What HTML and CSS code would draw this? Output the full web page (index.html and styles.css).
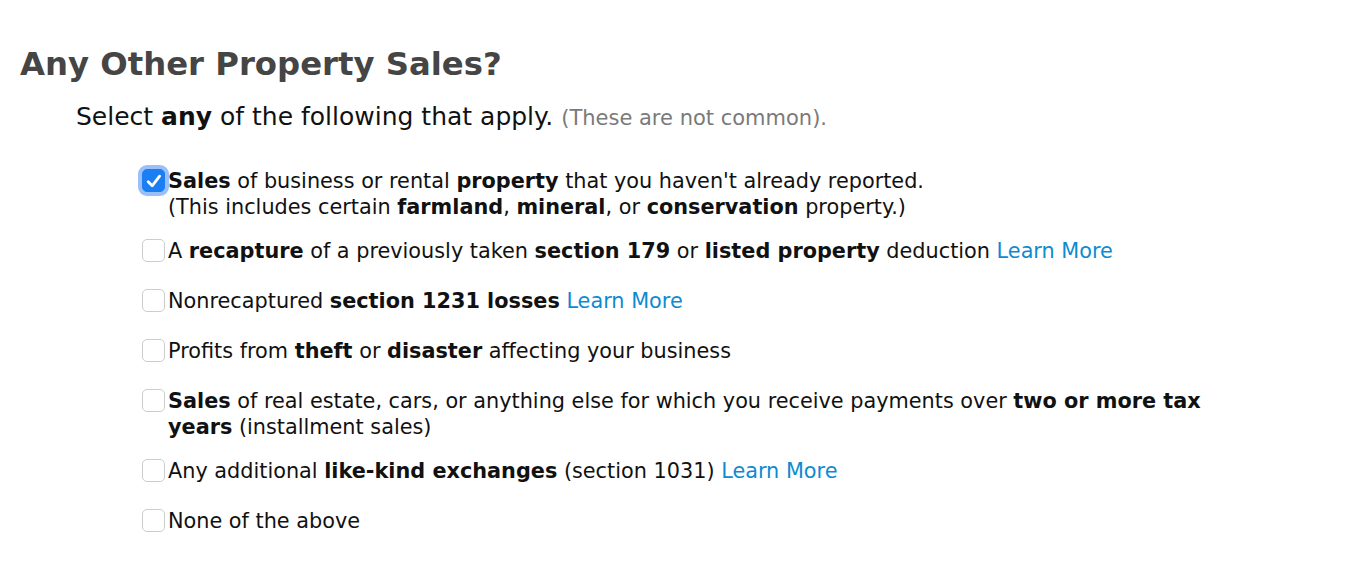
FILE: index.html
```html
<!DOCTYPE html>
<html>
<head>
<meta charset="utf-8">
<link rel="stylesheet" href="styles.css">
</head>
<body>
<main class="page">
  <h1 class="title">Any Other Property Sales?</h1>
  <p class="lead">Select <b>any</b> of the following that apply. <span class="note">(These are not common).</span></p>
  <ul class="options">
    <li class="option">
      <span class="box checked"><svg viewBox="0 0 20 20" width="20" height="20"><path d="M4.2 10.8 L8.2 14.8 L15.6 5.2" fill="none" stroke="#fff" stroke-width="2.8" stroke-linecap="round" stroke-linejoin="round"/></svg></span>
      <span class="label"><b>Sales</b> of business or rental <b>property</b> that you haven't already reported.<br>(This includes certain <b>farmland</b>, <b>mineral</b>, or <b>conservation</b> property.)</span>
    </li>
    <li class="option">
      <span class="box"></span>
      <span class="label">A <b>recapture</b> of a previously taken <b>section 179</b> or <b>listed property</b> deduction <a class="link" href="#">Learn More</a></span>
    </li>
    <li class="option">
      <span class="box"></span>
      <span class="label">Nonrecaptured <b>section 1231 losses</b> <a class="link" href="#">Learn More</a></span>
    </li>
    <li class="option">
      <span class="box"></span>
      <span class="label">Profits from <b>theft</b> or <b>disaster</b> affecting your business</span>
    </li>
    <li class="option">
      <span class="box"></span>
      <span class="label"><b>Sales</b> of real estate, cars, or anything else for which you receive payments over <b>two or more tax years</b> (installment sales)</span>
    </li>
    <li class="option">
      <span class="box"></span>
      <span class="label">Any additional <b>like-kind exchanges</b> (section 1031) <a class="link" href="#">Learn More</a></span>
    </li>
    <li class="option">
      <span class="box"></span>
      <span class="label">None of the above</span>
    </li>
  </ul>
</main>
</body>
</html>
```
FILE: styles.css
```css
html, body { margin: 0; padding: 0; background: #fff; }
body { font-family: "DejaVu Sans", "Liberation Sans", sans-serif; color: #111; }
.page { padding: 40px 0 0 20px; }
.title {
  margin: 0;
  font-size: 32.3px;
  line-height: 48px;
  font-weight: bold;
  color: #454545;
}
.lead {
  margin: 12px 0 0 56px;
  font-size: 25px;
  line-height: 34px;
  color: #111;
}
.lead b { font-weight: bold; }
.note { font-size: 21px; color: #7a7a7a; }
.options {
  list-style: none;
  margin: 33px 0 0 122px;
  padding: 0;
  width: 1070px;
}
.option {
  display: flex;
  align-items: flex-start;
  min-height: 32px;
  margin-bottom: 18px;
}
.box {
  flex: none;
  width: 23px;
  height: 23px;
  margin-top: 1px;
  border: 1px solid #cdcdcd;
  border-radius: 5px;
  background: #fff;
  box-sizing: border-box;
  margin-right: 3px;
  display: flex;
  align-items: center;
  justify-content: center;
}
.box.checked {
  background: #1b7ef3;
  border-color: #1b7ef3;
  box-shadow: 0 0 0 4px #9bbff7;
}
.label {
  font-size: 20.8px;
  line-height: 26px;
  color: #111;
}
.link { color: #0d8bd1; text-decoration: none; }
```
